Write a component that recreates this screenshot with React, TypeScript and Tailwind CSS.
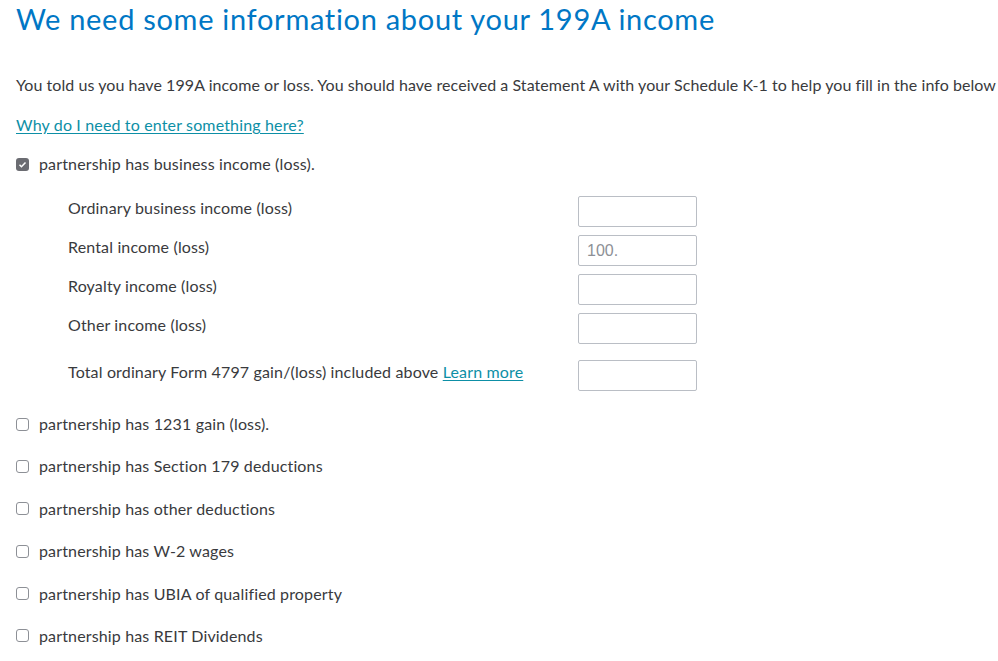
import React, { useState } from "react";

const fields = [
  { label: "Ordinary business income (loss)", value: "" },
  { label: "Rental income (loss)", value: "100." },
  { label: "Royalty income (loss)", value: "" },
  { label: "Other income (loss)", value: "" },
];

const options = [
  "partnership has 1231 gain (loss).",
  "partnership has Section 179 deductions",
  "partnership has other deductions",
  "partnership has W-2 wages",
  "partnership has UBIA of qualified property",
  "partnership has REIT Dividends",
];

function Box({ checked, onClick }: { checked: boolean; onClick: () => void }) {
  return (
    <button
      onClick={onClick}
      className={`flex h-[13px] w-[13px] shrink-0 items-center justify-center rounded-[3px] ${
        checked ? "bg-[#6b6c72]" : "border border-[#8d9096] bg-white"
      }`}
    >
      {checked && (
        <svg viewBox="0 0 12 12" className="h-[9px] w-[9px]">
          <path d="M2 6.3l2.6 2.6L10 3.2" fill="none" stroke="#fff" strokeWidth="2" />
        </svg>
      )}
    </button>
  );
}

function Amount({ value }: { value: string }) {
  const [v, setV] = useState(value);
  return (
    <input
      value={v}
      onChange={(e) => setV(e.target.value)}
      className="h-[31px] w-[119px] shrink-0 rounded-[2px] border border-[#babec5] bg-white px-2 font-['Liberation_Sans',sans-serif] text-[16px] tracking-normal text-[#8d9096] outline-none"
    />
  );
}

export default function App() {
  const [business, setBusiness] = useState(true);
  const [checked, setChecked] = useState<boolean[]>(options.map(() => false));

  return (
    <div className="min-h-screen bg-white px-4 font-['Lato',sans-serif] text-[16px] tracking-[0.15px] text-[#393a3d]">
      <h1 className="pt-[2px] text-[29px] leading-[34px] tracking-[0.7px] text-[#0077c5]">
        We need some information about your 199A income
      </h1>

      <p className="mt-[39px] whitespace-nowrap leading-[20px] tracking-[0.06px]">
        You told us you have 199A income or loss. You should have received a Statement A with your Schedule K-1 to help you fill in the info below
      </p>

      <a href="#" className="mt-[20px] block w-fit leading-[20px] text-[#0d8fa6] underline underline-offset-2">
        Why do I need to enter something here?
      </a>

      <label className="mt-[19px] flex items-center gap-[10px] leading-[20px]">
        <Box checked={business} onClick={() => setBusiness(!business)} />
        <span>partnership has business income (loss).</span>
      </label>

      {business && (
        <div className="mt-[22px] flex w-[681px] flex-col gap-[8px] pl-[52px]">
          {fields.map((f) => (
            <div key={f.label} className="flex items-start justify-between">
              <span className="pt-[2px] leading-[20px]">{f.label}</span>
              <Amount value={f.value} />
            </div>
          ))}
          <div className="mt-[8px] flex items-start justify-between">
            <span className="pt-[2px] leading-[20px]">
              Total ordinary Form 4797 gain/(loss) included above{" "}
              <a href="#" className="text-[#0d8fa6] underline underline-offset-2">
                Learn more
              </a>
            </span>
            <Amount value="" />
          </div>
        </div>
      )}

      <div className="mt-[23px] flex flex-col gap-[22.4px]">
        {options.map((o, i) => (
          <label key={o} className="flex items-center gap-[10px] leading-[20px]">
            <Box
              checked={checked[i]}
              onClick={() => setChecked(checked.map((c, j) => (j === i ? !c : c)))}
            />
            <span>{o}</span>
          </label>
        ))}
      </div>
    </div>
  );
}
